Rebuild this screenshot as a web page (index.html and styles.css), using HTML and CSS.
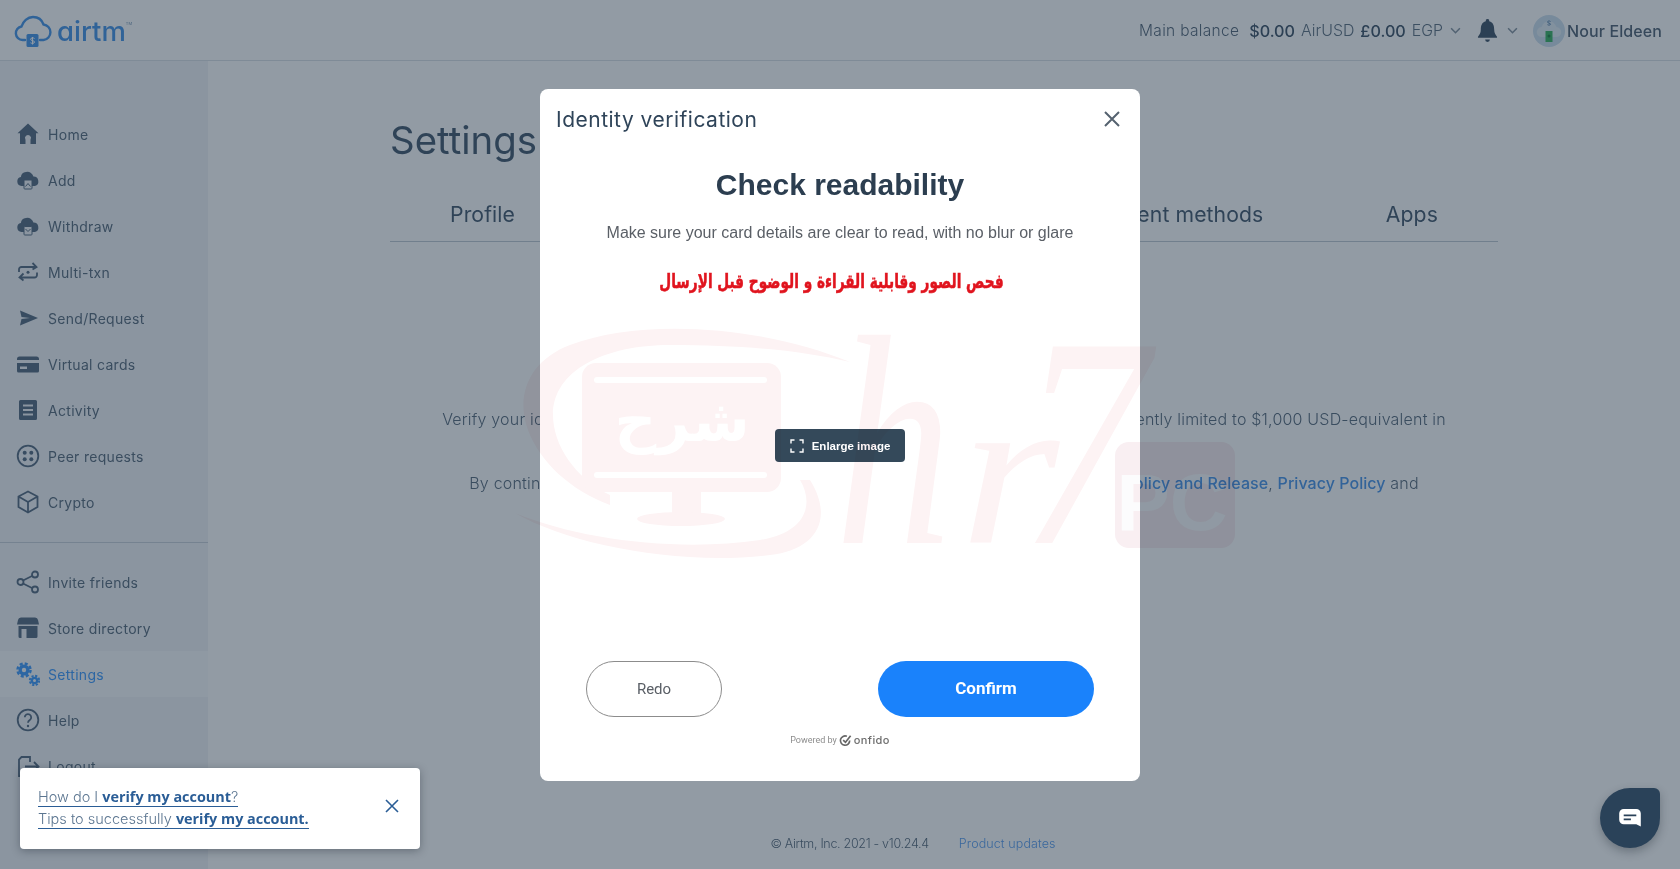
FILE: index.html
```html
<!DOCTYPE html>
<html lang="en">
<head>
<meta charset="utf-8">
<title>Airtm - Settings</title>
<link rel="stylesheet" href="styles.css">
</head>
<body>
<div class="app">
  <header class="topbar">
    <a class="logo">
      <svg class="logo-mark" viewBox="0 0 38 34" width="38" height="34"><path class="logo-cloud" d="M11 26H8.500a6.800 6.800 0 0 1-1-13.500C9 7.500 13.500 3 19 3c5 0 9 3 10.500 7.500A7.800 7.800 0 0 1 29.500 26H26"/><rect class="logo-card" x="12.500" y="20" width="12" height="13" rx="1.500"/><path class="logo-s" d="M20.500 24.500c-1-1-4-.8-4 .8s4 1 4 2.700-3 1.600-4 .8M18.500 23v7.500"/></svg>
      <span class="logo-word">airtm</span><span class="logo-tm">TM</span>
    </a>
    <div class="balance">
      <span class="bal-label">Main balance</span>
      <strong class="bal-amount first">$0.00</strong><span class="bal-cur">AirUSD</span>
      <strong class="bal-amount">£0.00</strong><span class="bal-cur">EGP</span>
      <svg class="chev" viewBox="0 0 12 8" width="11" height="7"><path d="M1 1.500l5 5 5-5"/></svg>
    </div>
    <svg class="bell" viewBox="0 0 22 26" width="21" height="25"><path d="M11 1a1.800 1.800 0 0 1 1.800 2.200C17 4.200 18 8 18 12c0 4 1.500 5.500 3 7.500v1H1v-1C2.500 17.500 4 16 4 12c0-4 1-7.800 5.200-8.800A1.800 1.800 0 0 1 11 1z"/><path d="M8.500 22.500h5a2.500 2.500 0 0 1-5 0z"/></svg>
    <svg class="chev chev-bell" viewBox="0 0 12 8" width="11" height="7"><path d="M1 1.500l5 5 5-5"/></svg>
    <svg class="avatar" viewBox="0 0 32 32" width="32" height="32"><circle cx="16" cy="16" r="16" fill="#c9dcec"/><path d="M9 22a5 5 0 0 1-.5-10C10 8 13 6 16 6s6 2 7.500 6A5 5 0 0 1 23 22z" fill="#dfeaf3"/><rect x="12.500" y="16" width="7" height="11" fill="#2fae5a"/><path d="M17.500 6.500c-1-.8-3-.6-3 .6s3 .8 3 2-2 1.200-3 .6" fill="none" stroke="#4a7aa8" stroke-width="1"/><circle cx="16" cy="21" r="1.500" fill="#157a3a"/></svg>
    <span class="user-name">Nour Eldeen</span>
  </header>

  <div class="shell">
    <aside class="sidebar">
      <nav class="nav nav-main">
        <a class="nav-item"><svg class="ico" viewBox="0 0 24 24"><path fill-rule="evenodd" d="M12 1.500l10.500 9.700H20V22h-5.500v-4.300a3 3 0 1 0-5 0V22H4V11.200H1.500z"/></svg><span>Home</span></a>
        <a class="nav-item"><svg class="ico" viewBox="0 0 24 24"><path d="M5.500 18a4.500 4.500 0 0 1-.6-8.900 5.500 5.500 0 0 1 5-5 6 6 0 0 1 7.500 4.500 4.800 4.800 0 0 1 1.500 9.400z"/><rect class="cut" x="8" y="12" width="8" height="9" rx=".8"/><path class="cutline" d="M9.500 18.500l2.500-3 2.500 3"/></svg><span>Add</span></a>
        <a class="nav-item"><svg class="ico" viewBox="0 0 24 24"><path d="M5.500 18a4.500 4.500 0 0 1-.6-8.900 5.500 5.500 0 0 1 5-5 6 6 0 0 1 7.500 4.500 4.800 4.800 0 0 1 1.500 9.400z"/><rect class="cut" x="8" y="12.500" width="8" height="8.500" rx=".8"/><path class="cutline" d="M9.500 15l2.500 2.500 2.500-2.500"/></svg><span>Withdraw</span></a>
        <a class="nav-item"><svg class="ico line" viewBox="0 0 24 24"><path d="M3 12V9.500A2.500 2.500 0 0 1 5.500 7H20M16.500 3L20.500 7l-4 2.500M21 12.500V15a2.500 2.500 0 0 1-2.500 2.500H4M7.500 13.500L3.500 17.500l4 3"/><circle class="solid" cx="12" cy="12.300" r="1.500"/></svg><span>Multi-txn</span></a>
        <a class="nav-item"><svg class="ico" viewBox="0 0 24 24"><path d="M4 4.500l18 7.500-18 7.500 1.500-6.500L14 12l-8.500-1z"/></svg><span>Send/Request</span></a>
        <a class="nav-item"><svg class="ico" viewBox="0 0 24 24"><path fill-rule="evenodd" d="M3.500 4.500h17A2.500 2.500 0 0 1 23 7v1H1V7a2.500 2.500 0 0 1 2.500-2.500zM1 11h22v8a1.500 1.500 0 0 1-1.500 1.500h-19A1.500 1.500 0 0 1 1 19zm3 3.500V17h7v-2.500z"/></svg><span>Virtual cards</span></a>
        <a class="nav-item"><svg class="ico" viewBox="0 0 24 24"><path fill-rule="evenodd" d="M4.500 2h15A1.500 1.500 0 0 1 21 3.500v17a1.500 1.500 0 0 1-1.500 1.500h-15A1.500 1.500 0 0 1 3 20.500v-17A1.500 1.500 0 0 1 4.500 2zM7 6.500v2h10v-2zm0 4.500v2h10v-2zm0 4.500v2h10v-2z"/></svg><span>Activity</span></a>
        <a class="nav-item"><svg class="ico line" viewBox="0 0 24 24"><circle cx="12" cy="12" r="10.300"/><circle class="solid" cx="8.700" cy="8.700" r="2"/><circle class="solid" cx="15.300" cy="8.700" r="2"/><circle class="solid" cx="8.700" cy="15.300" r="2"/><circle class="solid" cx="15.300" cy="15.300" r="2"/></svg><span>Peer requests</span></a>
        <a class="nav-item"><svg class="ico line" viewBox="0 0 24 24"><path d="M12 1.500l9.500 5v10.500L12 22.500 2.500 17V6.500zM2.500 6.500L12 12l9.500-5.500M12 12v10.500"/></svg><span>Crypto</span></a>
      </nav>
      <hr class="nav-sep">
      <nav class="nav">
        <a class="nav-item"><svg class="ico line" viewBox="0 0 24 24"><circle cx="4.500" cy="12" r="3"/><circle cx="19" cy="4.500" r="3"/><circle cx="19" cy="19.500" r="3"/><path d="M7 10.500l9.500-4.800M7 13.500l9.500 4.800"/></svg><span>Invite friends</span></a>
        <a class="nav-item"><svg class="ico" viewBox="0 0 24 24"><path d="M5 1.500h14a3 3 0 0 1 3 2.500l1 4.500H1L2 4a3 3 0 0 1 3-2.500z"/><path fill-rule="evenodd" d="M2.500 10h19v10.500a1.500 1.500 0 0 1-1.500 1.500H4a1.500 1.500 0 0 1-1.500-1.500zM5.500 13v9h5v-9z"/></svg><span>Store directory</span></a>
        <a class="nav-item active"><svg class="ico gears" viewBox="0 0 24 24"><circle cx="8" cy="8" r="5.500"/><circle class="teeth" cx="8" cy="8" r="6.500"/><circle class="hole" cx="8" cy="8" r="2.200"/><circle cx="18.500" cy="18.500" r="3.800"/><circle class="teeth small" cx="18.500" cy="18.500" r="4.700"/><circle class="hole" cx="18.500" cy="18.500" r="1.500"/></svg><span>Settings</span></a>
        <a class="nav-item"><svg class="ico line" viewBox="0 0 24 24"><circle cx="12" cy="12" r="10.300"/><path d="M8.800 9.300a3.200 3.200 0 1 1 5 2.700c-1.200.8-1.800 1.400-1.800 2.800"/><circle class="solid" cx="12" cy="18" r="1.200"/></svg><span>Help</span></a>
        <a class="nav-item"><svg class="ico line" viewBox="0 0 24 24"><path d="M14 8V3H5.500L3 5.500V22h11v-5M9 12.500h13M18 8l4.500 4.500L18 17"/></svg><span>Logout</span></a>
      </nav>
    </aside>

    <main class="content">
      <h1 class="page-title">Settings</h1>
      <div class="tabs">
        <a class="tab">Profile</a>
        <a class="tab">Security</a>
        <a class="tab">Verification</a>
        <a class="tab">Payment methods</a>
        <a class="tab">Apps</a>
      </div>
      <section class="verify">
        <p class="verify-line">Verify your identity to unlock all of the site's features and higher limits. Your account is currently limited to $1,000 USD-equivalent in</p>
        <p class="verify-line">By continuing you confirm that you agree to the Onfido Terms and the Airtm's <a class="link">Refund Policy and Release</a>, <a class="link">Privacy Policy</a> and</p>
      </section>
      <footer class="foot">
        <span class="foot-copy">© Airtm, Inc. 2021 - v10.24.4</span>
        <a class="foot-link">Product updates</a>
      </footer>
    </main>
  </div>

  <div class="backdrop"></div>

  <div class="modal">
    <div class="modal-head">
      <h2 class="modal-title">Identity verification</h2>
      <svg class="modal-close" viewBox="0 0 16 16" width="16" height="16"><path d="M1 1l14 14M15 1L1 15"/></svg>
    </div>
    <div class="modal-body">
      <h3 class="check-title">Check readability</h3>
      <p class="check-sub">Make sure your card details are clear to read, with no blur or glare</p>
      <p class="check-ar" lang="ar" dir="rtl">فحص الصور وقابلية القراءة و الوضوح قبل الإرسال</p>
      <div class="preview">
        <button class="enlarge">
          <svg viewBox="0 0 14 14" width="14" height="14"><path d="M1 4.500V1h3.500M9.500 1H13v3.500M13 9.500V13H9.500M4.500 13H1V9.500"/></svg>
          <span>Enlarge image</span>
        </button>
      </div>
      <div class="actions">
        <button class="btn-redo">Redo</button>
        <button class="btn-confirm">Confirm</button>
      </div>
      <div class="powered">
        <span>Powered by</span>
        <svg viewBox="0 0 14 14" width="13" height="13"><path d="M11.500 7a5 5 0 1 1-3-4.500M4.500 6.500L7 9l5.500-7"/></svg>
        <b>onfido</b>
      </div>
    </div>
  </div>

  <div class="toast">
    <div class="toast-text">
      <a class="toast-link">How do I <b>verify my account</b>?</a>
      <a class="toast-link">Tips to successfully <b>verify my account.</b></a>
    </div>
    <svg class="toast-close" viewBox="0 0 14 14" width="14" height="14"><path d="M1 1l12 12M13 1L1 13"/></svg>
  </div>

  <div class="chat">
    <svg viewBox="0 0 24 20" width="22" height="18"><path class="chat-bubble" d="M5 0h14a5 5 0 0 1 5 5v14.500l-5-2.500H5a5 5 0 0 1-5-5V5a5 5 0 0 1 5-5z"/><path class="chat-line" d="M5 7h14M5 11.500h8"/></svg>
  </div>

  <svg class="watermark" viewBox="0 0 1680 869" width="1680" height="869">
    <path class="wm" fill-rule="evenodd" d="M850 362C760 325 640 318 570 345C530 360 515 395 528 430C540 462 570 490 610 505L610 495C575 478 553 445 553 415C553 370 605 345 670 345C740 345 800 350 850 362Z"/>
    <path class="wm" d="M515 513C580 540 680 552 760 540C805 533 815 505 800 480L810 480C835 520 815 550 770 555C680 566 570 545 515 513Z"/>
    <rect class="wm" x="582" y="363" width="199" height="129" rx="14"/>
    <rect class="wm-cut" x="594" y="377" width="173" height="6" rx="3"/>
    <rect class="wm-cut" x="594" y="472" width="173" height="6" rx="3"/>
    <rect class="wm" x="672" y="492" width="29" height="22"/>
    <ellipse class="wm" cx="681" cy="519" rx="44" ry="7"/>
    <text class="wm-ar" x="682" y="441" lang="ar" direction="rtl">شرح</text>
    <text class="wm-big" transform="translate(835 543) scale(.78 1)">h</text>
    <text class="wm-big" transform="translate(960 543) scale(.85 .72)">r</text>
    <text class="wm-big" transform="translate(1020 543) scale(.85 1)">7</text>
    <rect class="wm-box" x="1115" y="442" width="120" height="106" rx="14"/>
    <text class="wm-pc" x="1172" y="530">PC</text>
  </svg>
</div>
</body>
</html>
```
FILE: styles.css
```css
* { box-sizing: border-box; }
html, body { margin: 0; height: 100%; }
body { font-family: "Inter", "Liberation Sans", sans-serif; color: #4a5d70; background: #fff; overflow: hidden; }
a { color: inherit; text-decoration: none; }
svg { display: block; flex: none; }
button { font: inherit; cursor: pointer; }

.app { position: relative; width: 1680px; height: 869px; overflow: hidden; display: flex; flex-direction: column; }

/* Top bar */
.topbar { height: 61px; flex: none; display: flex; align-items: center; padding: 1px 18px 0 14px; border-bottom: 1px solid #d9dfe5; background: #fff; }
.logo { display: flex; align-items: center; margin-right: auto; position: relative; }
.logo-cloud { fill: none; stroke: #3b8ee6; stroke-width: 2.400; stroke-linecap: round; }
.logo-card { fill: #3b8ee6; }
.logo-s { fill: none; stroke: #fff; stroke-width: 1; }
.logo-word { font-family: "Inter", sans-serif; font-feature-settings: "cv11"; font-size: 27.500px; line-height: 30px; font-weight: 500; margin-left: 5px; color: #3b8ee6; }
.logo-tm { font-size: 4px; align-self: flex-start; margin-top: 7px; color: #6b8cae; }
.balance { display: flex; align-items: center; font-size: 15.500px; }
.bal-label { font-weight: 300; color: #4a5d70; margin-right: 10px; letter-spacing: .3px; }
.bal-amount { font-weight: 500; color: #33485e; font-size: 16.200px; margin-left: 6px; }
.bal-amount.first { margin-left: 0; }
.bal-cur { font-weight: 300; color: #55687a; font-size: 15.900px; margin-left: 6px; }
.chev { fill: none; stroke: #7d8c9a; stroke-width: 1.800; }
.balance .chev { margin-left: 7px; }
.bell { fill: #33485e; margin-left: 16px; }
.chev-bell { margin-left: 9px; }
.avatar { margin-left: 15px; }
.user-name { font-size: 16px; font-weight: 500; color: #46596c; margin-left: 2px; letter-spacing: .1px; }

/* Sidebar */
.shell { flex: 1; display: flex; min-height: 0; }
.sidebar { width: 208px; flex: none; background: #f0f3f7; padding-top: 50px; }
.nav { display: flex; flex-direction: column; }
.nav-item { height: 46px; display: flex; align-items: center; gap: 8px; padding-left: 16px; font-size: 14px; letter-spacing: .3px; color: #4f6275; }
.nav-item.active { background: #f9fafc; color: #3395fd; }
.ico { width: 24px; height: 24px; fill: #4a6078; }
.ico .cut { fill: #f0f3f7; stroke: #4a6078; stroke-width: 1; }
.ico .cutline { fill: none; stroke: #4a6078; stroke-width: 1; }
.ico.line { fill: none; stroke: #4a6078; stroke-width: 1.800; }
.ico .solid { fill: #4a6078; stroke: none; }
.gears { fill: #3395fd; }
.gears .teeth { fill: none; stroke: #3395fd; stroke-width: 2.500; stroke-dasharray: 3 2.100; }
.gears .teeth.small { stroke-width: 2; stroke-dasharray: 2.200 1.500; }
.gears .hole { fill: #f9fafc; }
.nav-sep { margin: 17px 0 16px; border: 0; border-top: 1px solid #c4cdd7; }

/* Content */
.content { flex: 1; min-width: 0; padding: 49px 182px 0; display: flex; flex-direction: column; }
.page-title { margin: 0; font-size: 38.400px; line-height: 60px; font-weight: 400; color: #394f65; }
.tabs { display: flex; justify-content: space-between; margin-top: 29px; height: 43px; border-bottom: 1px solid #bcc6d0; }
.tab { padding: 0 60px; font-size: 21.200px; line-height: 30px; letter-spacing: .1px; color: #394f65; white-space: nowrap; }
.verify { margin-top: 165px; text-align: center; font-size: 16px; font-weight: 300; color: #4f6275; }
.verify-line { margin: 0 0 40px; line-height: 24px; white-space: nowrap; letter-spacing: .2px; }
.link { color: #3f8fe8; font-weight: 500; letter-spacing: .05px; }
.foot { margin-top: auto; padding: 0 62px 14px 0; display: flex; justify-content: center; gap: 30px; font-size: 12.500px; line-height: 22px; font-weight: 300; color: #4f6275; }
.foot-copy { letter-spacing: -.3px; }
.foot-link { color: #4f97ef; letter-spacing: .1px; }

/* Overlay layer */
.backdrop { position: absolute; inset: 0; background: rgba(38, 56, 74, .5); }

/* Modal */
.modal { position: absolute; left: 540px; top: 89px; width: 600px; height: 692px; background: #fff; border-radius: 8px; display: flex; flex-direction: column; }
.modal-head { display: flex; align-items: center; justify-content: space-between; padding: 0 20px 0 16px; height: 60px; flex: none; }
.modal-title { margin: 0; font-size: 21px; font-weight: 400; color: #2f4459; letter-spacing: .5px; }
.modal-close { fill: none; stroke: #55626f; stroke-width: 2; }
.modal-body { flex: 1; display: flex; flex-direction: column; align-items: center; font-family: "Liberation Sans", sans-serif; }
.check-title { margin: 17px 0 0; font-size: 30px; line-height: 38px; font-weight: 700; color: #2c3e50; }
.check-sub { margin: 17px 0 0; font-size: 16px; line-height: 24px; color: #5a5f66; }
.check-ar { margin: 22px 18px 0 0; font-family: "DejaVu Sans", sans-serif; font-size: 18px; line-height: 28px; font-weight: 700; color: #e0141e; transform: scale(.76, 1.1); -webkit-text-stroke: .5px #e0141e; }
.preview { height: 167px; display: flex; align-items: flex-end; }
.enlarge { width: 130px; height: 33px; display: flex; align-items: center; justify-content: center; gap: 8px; background: #34495a; border: 0; border-radius: 4px; color: #fff; font-family: "Liberation Sans", sans-serif; font-size: 11.500px; font-weight: 700; }
.enlarge svg { fill: none; stroke: #fff; stroke-width: 1.400; }
.actions { width: 508px; display: flex; justify-content: space-between; margin-top: 199px; }
.btn-redo { width: 136px; height: 56px; border: 1px solid #8c8c8c; border-radius: 28px; background: #fff; font-family: "Roboto", sans-serif; font-size: 15px; color: #5a5f66; }
.btn-confirm { width: 216px; height: 56px; border: 0; border-radius: 28px; padding-bottom: 3px; background: #1a82fb; font-family: "Roboto", sans-serif; font-size: 17px; font-weight: 700; color: #fff; }
.powered { margin-top: 15px; display: flex; align-items: center; gap: 2px; color: #8d8d8d; font-size: 9px; line-height: 16px; font-family: "Roboto", sans-serif; }
.powered svg { fill: none; stroke: #666; stroke-width: 1.800; }
.powered b { font-family: "Inter", sans-serif; font-size: 11px; font-weight: 500; color: #6c6c6c; letter-spacing: .4px; }

/* Toast */
.toast { position: absolute; left: 20px; top: 768px; width: 400px; height: 81px; background: #fff; border-radius: 4px; box-shadow: 0 2px 8px rgba(20, 30, 40, .35); display: flex; align-items: center; justify-content: space-between; padding: 0 21px 0 18px; }
.toast-text { display: flex; flex-direction: column; align-items: flex-start; gap: 3px; font-size: 14.500px; line-height: 18px; font-weight: 300; color: #5b7590; }
.toast-link { border-bottom: 1px solid #2a5d96; }
.toast-link b { font-family: "Open Sans", sans-serif; font-weight: 700; font-size: 14.400px; color: #2a5d96; }
.toast-close { fill: none; stroke: #2a5d96; stroke-width: 1.600; margin-bottom: 6px; }

/* Chat launcher */
.chat { position: absolute; left: 1600px; top: 788px; width: 60px; height: 60px; background: #2a4259; border-radius: 30px 6px 30px 30px; box-shadow: 0 4px 10px rgba(20, 30, 40, .3); display: flex; align-items: center; justify-content: center; }
.chat-bubble { fill: #fff; }
.chat-line { fill: none; stroke: #2a4259; stroke-width: 2; }

/* Watermark over the whole picture */
.watermark { position: absolute; left: 0; top: 0; mix-blend-mode: multiply; pointer-events: none; }
.wm { fill: #fdf3f4; }
.wm-box { fill: #f9eff2; }
.wm-cut { fill: #fff; }
.wm-ar { font-family: "DejaVu Sans", sans-serif; font-weight: 700; font-size: 58px; fill: #fff; text-anchor: middle; }
.wm-big { font-family: "Liberation Serif", serif; font-style: italic; font-size: 300px; fill: #fdf3f4; }
.wm-pc { font-family: "Liberation Sans", sans-serif; font-weight: 700; font-size: 80px; fill: #fcfcfd; text-anchor: middle; }
```
